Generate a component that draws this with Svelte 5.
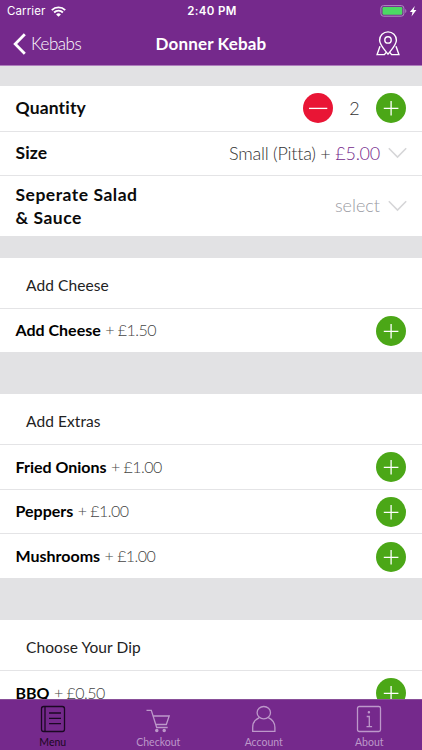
<script lang="ts">
  interface Item {
    name: string;
    price: string;
  }

  interface Section {
    title: string;
    items: Item[];
  }

  let quantity = $state(2);
  let activeTab = $state("Menu");

  const sections: Section[] = [
    { title: "Add Cheese", items: [{ name: "Add Cheese", price: "£1.50" }] },
    {
      title: "Add Extras",
      items: [
        { name: "Fried Onions", price: "£1.00" },
        { name: "Peppers", price: "£1.00" },
        { name: "Mushrooms", price: "£1.00" },
      ],
    },
    { title: "Choose Your Dip", items: [{ name: "BBQ", price: "£0.50" }] },
  ];

  const tabs = ["Menu", "Checkout", "Account", "About"];
</script>

{#snippet plus()}
  <svg width="30" height="30" viewBox="0 0 30 30" fill="none" stroke="#fff" stroke-width="1.3">
    <path d="M7.8 15.4h14.6M15.1 8v14.6" />
  </svg>
{/snippet}

{#snippet chevron()}
  <svg class="chevron" width="19" height="12" viewBox="0 0 19 12" fill="none" stroke="#d6d6d8" stroke-width="1.6">
    <path d="M.8 1.2l8.7 8.8 8.7-8.8" />
  </svg>
{/snippet}

<div class="screen">
  <header>
    <div class="status">
      <div class="carrier">
        <span>Carrier</span>
        <svg width="15" height="11" viewBox="0 0 15 11" fill="none" stroke="#fff" stroke-width="1.9">
          <path d="M.8 4.1a9.6 9.6 0 0 1 13.4 0M3.1 6.5a6.2 6.2 0 0 1 8.8 0" />
          <path d="M7.5 10.8L5.1 8.4a3.4 3.4 0 0 1 4.8 0z" fill="#fff" stroke="none" />
        </svg>
      </div>
      <span class="time">2:40 PM</span>
      <svg class="battery" width="37" height="12" viewBox="0 0 37 12">
        <rect x=".9" y=".6" width="23" height="10.6" rx="2.6" fill="none" stroke="#b18bc4" />
        <rect x="2.5" y="2.1" width="19.8" height="7.6" rx="1.2" fill="#4cd964" />
        <path d="M25.3 4v4c1.4-.6 1.4-3.4 0-4z" fill="#b18bc4" />
        <path d="M34.8 .9l-4.900 6h2.600l-1 4.500 4.900-6.300h-2.700z" fill="#fff" />
      </svg>
    </div>
    <nav class="navbar">
      <button class="back">
        <svg width="13" height="22" viewBox="0 0 13 22" fill="none" stroke="#fff" stroke-width="2.8">
          <path d="M11.8 1.2L2.2 11l9.6 9.8" />
        </svg>
        <span>Kebabs</span>
      </button>
      <h1>Donner Kebab</h1>
      <button class="map" aria-label="Map">
        <svg width="24" height="25" viewBox="0 0 24 25" fill="none" stroke="#fff" stroke-width="1.4">
          <path d="M12 23.2C9 19.2 3.6 14 3.6 9.3a8.4 8.4 0 0 1 16.8 0C20.4 14 15 19.2 12 23.2z" />
          <circle cx="12" cy="8.9" r="3.2" />
          <path d="M4 15.3L1.1 23.6h7.3l1.8-2.2M20 15.3l2.9 8.3h-7.3l-1.8-2.2" />
        </svg>
      </button>
    </nav>
  </header>

  <main>
    <section class="options">
      <div class="row">
        <span class="label">Quantity</span>
        <div class="stepper">
          <button class="round minus" aria-label="Less" onclick={() => quantity--}>
            <svg width="30" height="30" viewBox="0 0 30 30" stroke="#fff" stroke-width="1.3">
              <path d="M6 15.4h18.3" />
            </svg>
          </button>
          <span class="count">{quantity}</span>
          <button class="round" aria-label="More" onclick={() => quantity++}>{@render plus()}</button>
        </div>
      </div>
      <div class="row">
        <span class="label size">Size</span>
        <span class="value">Small (Pitta) + <b>£5.00</b></span>
        {@render chevron()}
      </div>
      <div class="row tall">
        <span class="label">Seperate Salad<br />&amp; Sauce</span>
        <span class="value select">select</span>
        {@render chevron()}
      </div>
    </section>

    {#each sections as section}
      <section>
        <h2>{section.title}</h2>
        {#each section.items as item}
          <div class="row item">
            <span class="name">{item.name}</span>
            <span class="price">+ {item.price}</span>
            <button class="round" aria-label="Add {item.name}">{@render plus()}</button>
          </div>
        {/each}
      </section>
    {/each}
  </main>

  <footer>
    {#each tabs as tab}
      <button class="tab" class:active={activeTab === tab} onclick={() => (activeTab = tab)}>
        <svg width="26" height="28" viewBox="0 0 26 28" fill="none" stroke="currentColor" stroke-width="1.3">
          {#if tab === "Menu"}
            <rect x="1.5" y="1.5" width="23" height="25" rx="2.2" />
            <path d="M5 1.5v25M9 8h12M9 13.3h12M9 18.6h12" />
          {:else if tab === "Checkout"}
            <path d="M1.5 5.3h4.8l5.4 17.2h11M7.8 11h16.4l-2.9 8.5H10.7" />
            <circle cx="11.8" cy="25.4" r="1.1" fill="currentColor" />
            <circle cx="19.2" cy="25.4" r="1.1" fill="currentColor" />
          {:else if tab === "Account"}
            <ellipse cx="12.8" cy="7.7" rx="6.7" ry="6.2" />
            <path d="M8.3 12.6C4.2 14.5 1.7 18.5 1.7 22.5v3.9h22.2v-3.9c0-4-2.5-8-6.6-9.9" />
          {:else}
            <rect x="1.5" y="1.5" width="23" height="25" rx="1.8" />
            <path d="M10.7 11.5h2.6v10M10.5 21.6h5.6" />
            <circle cx="12.9" cy="7.3" r=".6" fill="currentColor" />
          {/if}
        </svg>
        <span>{tab}</span>
      </button>
    {/each}
  </footer>
</div>

<style>
  :global(body) {
    margin: 0;
    overflow: hidden;
  }

  .screen {
    height: 750px;
    display: flex;
    flex-direction: column;
    overflow: hidden;
    background: #e2e2e4;
    font-family: Lato, sans-serif;
    color: #0b0b0b;
  }

  button {
    border: 0;
    padding: 0;
    background: none;
    font: inherit;
    color: inherit;
    cursor: pointer;
  }

  svg {
    display: block;
    flex: none;
  }

  header {
    height: 65px;
    flex: none;
    background: #75298c;
    border-bottom: 1px solid #ad7dbb;
    color: #fff;
  }

  .status {
    height: 22px;
    display: grid;
    grid-template-columns: 1fr auto 1fr;
    align-items: center;
    padding: 0 5px 0 7px;
    font-family: Inter, sans-serif;
    font-size: 11.5px;
  }

  .carrier {
    display: flex;
    align-items: center;
    gap: 6px;
    letter-spacing: 0.1px;
  }

  .time {
    font-weight: 600;
    letter-spacing: 0.35px;
  }

  .battery {
    justify-self: end;
  }

  .navbar {
    height: 43px;
    display: grid;
    grid-template-columns: 1fr auto 1fr;
    align-items: center;
    padding: 0 22px 0 13px;
  }

  .back {
    display: flex;
    align-items: center;
    gap: 5px;
    font-size: 17px;
    font-weight: 300;
    letter-spacing: -0.5px;
  }

  h1 {
    margin: 0 -9px 0 0;
    font-size: 17px;
    font-weight: 700;
    letter-spacing: 0.15px;
  }

  .map {
    justify-self: end;
  }

  main {
    flex: 1;
    min-height: 0;
    overflow: hidden;
    padding-top: 20px;
  }

  section {
    margin-bottom: 41.7px;
    background: #fff;
  }

  .options {
    margin-bottom: 21.4px;
  }

  .row {
    box-sizing: border-box;
    height: 44.7px;
    display: flex;
    align-items: center;
    padding: 0 16px 0 15.5px;
  }

  .row + .row,
  h2 + .row {
    border-top: 1px solid #e4e4e6;
  }

  .tall {
    height: 60.8px;
  }

  .label {
    font-size: 17.5px;
    font-weight: 700;
    line-height: 23px;
    letter-spacing: 0.15px;
    margin-top: -1px;
  }

  .size {
    margin-top: -3px;
  }

  .tall .label {
    letter-spacing: 0.5px;
  }

  .stepper {
    display: flex;
    align-items: center;
    margin-left: auto;
  }

  .count {
    width: 43px;
    text-align: center;
    font-size: 18px;
    font-weight: 300;
    color: #333;
  }

  .round {
    width: 30px;
    height: 30px;
    flex: none;
    border-radius: 50%;
    background: #4ba717;
  }

  .minus {
    background: #e91535;
  }

  .value {
    margin: -2px 0 0 auto;
    font-size: 18px;
    font-weight: 300;
    letter-spacing: -0.24px;
    color: #333;
  }

  .value b {
    font-weight: 300;
    color: #75298c;
  }

  .value.select {
    letter-spacing: 0;
    color: #999aa2;
  }

  .chevron {
    margin: -1px -1px 0 8px;
  }

  h2 {
    height: 50px;
    margin: 0;
    padding-left: 26px;
    font-size: 15.5px;
    font-weight: 400;
    letter-spacing: 0.08px;
    line-height: 54px;
    color: #222;
  }

  .item {
    font-size: 16px;
  }

  .name,
  .price {
    margin-top: -1px;
  }

  .name {
    font-weight: 700;
    color: #000;
  }

  .price {
    margin-left: 4.5px;
    font-weight: 300;
    letter-spacing: -0.55px;
    color: #444;
  }

  .item .round {
    margin: 1px 0 0 auto;
  }

  footer {
    height: 51px;
    flex: none;
    box-sizing: border-box;
    display: grid;
    grid-template-columns: repeat(4, 1fr);
    background: #75298c;
    border-top: 1px solid #895099;
  }

  .tab {
    display: flex;
    flex-direction: column;
    align-items: center;
    justify-content: flex-start;
    gap: 3px;
    padding-top: 5px;
    font-size: 10.5px;
    line-height: 13px;
    color: #bd98ca;
  }

  .tab.active {
    color: #1b0823;
  }
</style>
